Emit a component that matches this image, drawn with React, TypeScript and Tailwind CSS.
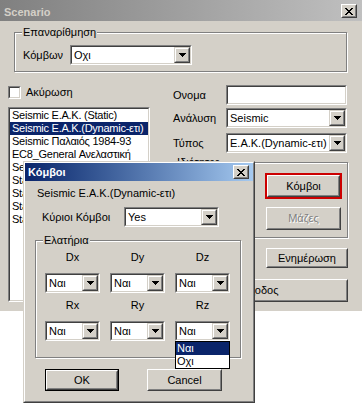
import React from "react";

function Sunken({ className = "", inner = "", children }: { className?: string; inner?: string; children?: React.ReactNode }) {
  return (
    <div className={`border border-t-[#808080] border-l-[#808080] border-b-white border-r-white ${className}`}>
      <div className={`h-full w-full border border-t-[#404040] border-l-[#404040] border-b-[#d4d0c8] border-r-[#d4d0c8] bg-white ${inner}`}>
        {children}
      </div>
    </div>
  );
}

function Arrow() {
  return (
    <svg width="7" height="4" viewBox="0 0 7 4" shapeRendering="crispEdges">
      <rect x="0" y="0" width="7" height="1" fill="#000" />
      <rect x="1" y="1" width="5" height="1" fill="#000" />
      <rect x="2" y="2" width="3" height="1" fill="#000" />
      <rect x="3" y="3" width="1" height="1" fill="#000" />
    </svg>
  );
}

function ArrowBtn() {
  return (
    <div className="w-[16px] h-full border border-t-[#d4d0c8] border-l-[#d4d0c8] border-b-[#404040] border-r-[#404040] shrink-0">
      <div className="h-full w-full border border-t-white border-l-white border-b-[#808080] border-r-[#808080] bg-[#d4d0c8] flex items-center justify-center">
        <Arrow />
      </div>
    </div>
  );
}

function Combo({ className, value }: { className: string; value: string }) {
  return (
    <Sunken className={className} inner="flex items-stretch">
      <div className="flex-1 flex items-center pl-[2px] whitespace-nowrap overflow-hidden">{value}</div>
      <ArrowBtn />
    </Sunken>
  );
}

function Btn({ className = "", children, disabled = false }: { className?: string; children: React.ReactNode; disabled?: boolean }) {
  return (
    <div className={`border border-t-white border-l-white border-b-[#404040] border-r-[#404040] ${className}`}>
      <div
        className={`h-full w-full border border-t-[#d4d0c8] border-l-[#d4d0c8] border-b-[#808080] border-r-[#808080] bg-[#d4d0c8] flex items-center justify-center whitespace-nowrap ${
          disabled ? "text-[#808080] [text-shadow:1px_1px_0_#fff]" : ""
        }`}
      >
        {children}
      </div>
    </div>
  );
}

function CloseBtn() {
  return (
    <div className="w-[16px] h-[14px] border border-t-white border-l-white border-b-[#404040] border-r-[#404040] shrink-0">
      <div className="h-full w-full border border-t-[#d4d0c8] border-l-[#d4d0c8] border-b-[#808080] border-r-[#808080] bg-[#d4d0c8] flex items-center justify-center">
        <svg width="8" height="7" viewBox="0 0 8 7" shapeRendering="crispEdges">
          <path d="M0 0h2v1h-2z M6 0h2v1h-2z M1 1h2v1h-2z M5 1h2v1h-2z M2 2h4v1h-4z M3 3h2v1h-2z M2 4h4v1h-4z M1 5h2v1h-2z M5 5h2v1h-2z M0 6h2v1h-2z M6 6h2v1h-2z" fill="#000" />
        </svg>
      </div>
    </div>
  );
}

function Group({ className = "", label, children }: { className?: string; label: string; children?: React.ReactNode }) {
  return (
    <div className={`relative border border-[#808080] shadow-[inset_1px_1px_0_#fff,1px_1px_0_#fff] ${className}`}>
      <span className="absolute left-[7px] -top-[7px] bg-[#d4d0c8] px-[1px] leading-[13px] whitespace-nowrap">{label}</span>
      {children}
    </div>
  );
}

const items = [
  "Seismic E.A.K. (Static)",
  "Seismic E.A.K.(Dynamic-ετι)",
  "Seismic Παλαιός 1984-93",
  "EC8_General Ανελαστική",
  "Seismic E.A.K.(Dynamic)",
  "Static 1",
  "Static 2",
  "Static 3",
  "Static 4",
];

export default function App() {
  return (
    <div className="relative w-[362px] h-[405px] bg-white text-[11px] text-black font-['Liberation_Sans',Arial,sans-serif] leading-[13px] overflow-hidden">
      {/* Main window */}
      <div className="w-[362px] h-[311px] bg-[#d4d0c8] flex flex-col">
        <div className="h-[21px] pt-[3px] bg-gradient-to-r from-[#808080] to-[#c0c0c0] flex items-start pl-[4px] pr-[5px]">
          <span className="flex-1 font-bold text-[#d4d0c8] leading-[14px] pt-[2px]">Scenario</span>
          <div className="pt-[1px]">
            <CloseBtn />
          </div>
        </div>

        <Group className="ml-[14px] mt-[11px] w-[333px] h-[40px]" label="Επαναρίθμηση">
          <div className="flex items-center pl-[8px] pt-[12px]">
            <span className="w-[47px]">Κόμβων</span>
            <Combo className="w-[122px] h-[20px]" value="Οχι" />
          </div>
        </Group>

        <div className="flex mt-[13px]">
          {/* left column */}
          <div className="ml-[8px] w-[142px] flex flex-col">
            <div className="flex items-center mt-[1px] h-[13px]">
              <Sunken className="w-[13px] h-[13px]" />
              <span className="ml-[5px]">Ακύρωση</span>
            </div>
            <Sunken className="mt-[8px] h-[195px]" inner="overflow-hidden">
              {items.map((t, i) => (
                <div
                  key={i}
                  className={`h-[13px] pl-[2px] whitespace-nowrap tracking-[-0.25px] ${i === 1 ? "bg-[#0a246a] text-white" : ""}`}
                >
                  {t}
                </div>
              ))}
            </Sunken>
          </div>

          {/* right column */}
          <div className="ml-[18px] w-[180px] flex flex-col">
            <div className="flex items-center h-[20px]">
              <span className="w-[58px] pl-[5px]">Ονομα</span>
              <Sunken className="w-[121px] h-[20px]" />
            </div>
            <div className="flex items-center h-[20px] mt-[3px]">
              <span className="w-[58px] pl-[5px]">Ανάλυση</span>
              <Combo className="w-[121px] h-[20px]" value="Seismic" />
            </div>
            <div className="flex items-center h-[20px] mt-[5px]">
              <span className="w-[58px] pl-[5px]">Τύπος</span>
              <Combo className="w-[121px] h-[20px]" value="E.A.K.(Dynamic-ετι)" />
            </div>
            <Group className="mt-[9px] h-[76px]" label="Ιδιότητες">
              <div className="flex flex-col items-end pr-[5px] pt-[10px]">
                <div className="border-2 border-[#cc0000]">
                  <Btn className="w-[73px] h-[22px]">Κόμβοι</Btn>
                </div>
                <Btn className="w-[75px] h-[23px] mt-[8px] mr-[1px]" disabled>
                  Μάζες
                </Btn>
              </div>
            </Group>
            <Btn className="self-end w-[82px] h-[20px] mt-[10px]">Ενημέρωση</Btn>
            <Btn className="self-end w-[176px] h-[23px] mt-[11px]">Έξοδος</Btn>
          </div>
        </div>
      </div>

      {/* Κόμβοι dialog */}
      <div className="absolute left-[23px] top-[161px] w-[232px] h-[242px] border border-t-[#d4d0c8] border-l-[#d4d0c8] border-b-[#404040] border-r-[#404040]">
        <div className="h-full w-full border border-t-white border-l-white border-b-[#808080] border-r-[#808080] bg-[#d4d0c8] flex flex-col">
          <div className="h-[18px] bg-gradient-to-r from-[#0a246a] to-[#a6caf0] flex items-center pl-[3px] pr-[4px]">
            <span className="flex-1 font-bold text-white">Κόμβοι</span>
            <CloseBtn />
          </div>
          <div className="mt-[6px] pl-[12px] h-[13px] whitespace-nowrap">Seismic E.A.K.(Dynamic-ετι)</div>
          <div className="mt-[7px] flex items-center h-[20px] pl-[17px]">
            <span className="w-[82px]">Κύριοι Κόμβοι</span>
            <Combo className="w-[95px] h-[20px]" value="Yes" />
          </div>
          <Group className="ml-[10px] mt-[13px] w-[206px] h-[118px]" label="Ελατήρια">
            <div className="flex flex-col pl-[9px] pt-[10px]">
              <div className="flex gap-[10px] h-[13px]">
                <span className="w-[55px] text-center">Dx</span>
                <span className="w-[55px] text-center">Dy</span>
                <span className="w-[55px] text-center">Dz</span>
              </div>
              <div className="flex gap-[10px] mt-[9px]">
                <Combo className="w-[55px] h-[20px]" value="Ναι" />
                <Combo className="w-[55px] h-[20px]" value="Ναι" />
                <Combo className="w-[55px] h-[20px]" value="Ναι" />
              </div>
              <div className="flex gap-[10px] h-[13px] mt-[6px]">
                <span className="w-[55px] text-center">Rx</span>
                <span className="w-[55px] text-center">Ry</span>
                <span className="w-[55px] text-center">Rz</span>
              </div>
              <div className="flex gap-[10px] mt-[9px]">
                <Combo className="w-[55px] h-[20px]" value="Ναι" />
                <Combo className="w-[55px] h-[20px]" value="Ναι" />
                <Combo className="w-[55px] h-[20px]" value="Ναι" />
              </div>
            </div>
          </Group>
          <div className="flex mt-[11px] pl-[20px]">
            <div className="border border-black">
              <Btn className="w-[72px] h-[20px]">OK</Btn>
            </div>
            <Btn className="ml-[28px] w-[75px] h-[22px]">Cancel</Btn>
          </div>
        </div>
      </div>

      {/* open dropdown list */}
      <div className="absolute left-[175px] top-[341px] w-[55px] h-[28px] border border-black bg-white">
        <div className="h-[13px] bg-[#0a246a] text-white pl-[1px]">Ναι</div>
        <div className="h-[13px] pl-[1px]">Οχι</div>
      </div>
    </div>
  );
}
